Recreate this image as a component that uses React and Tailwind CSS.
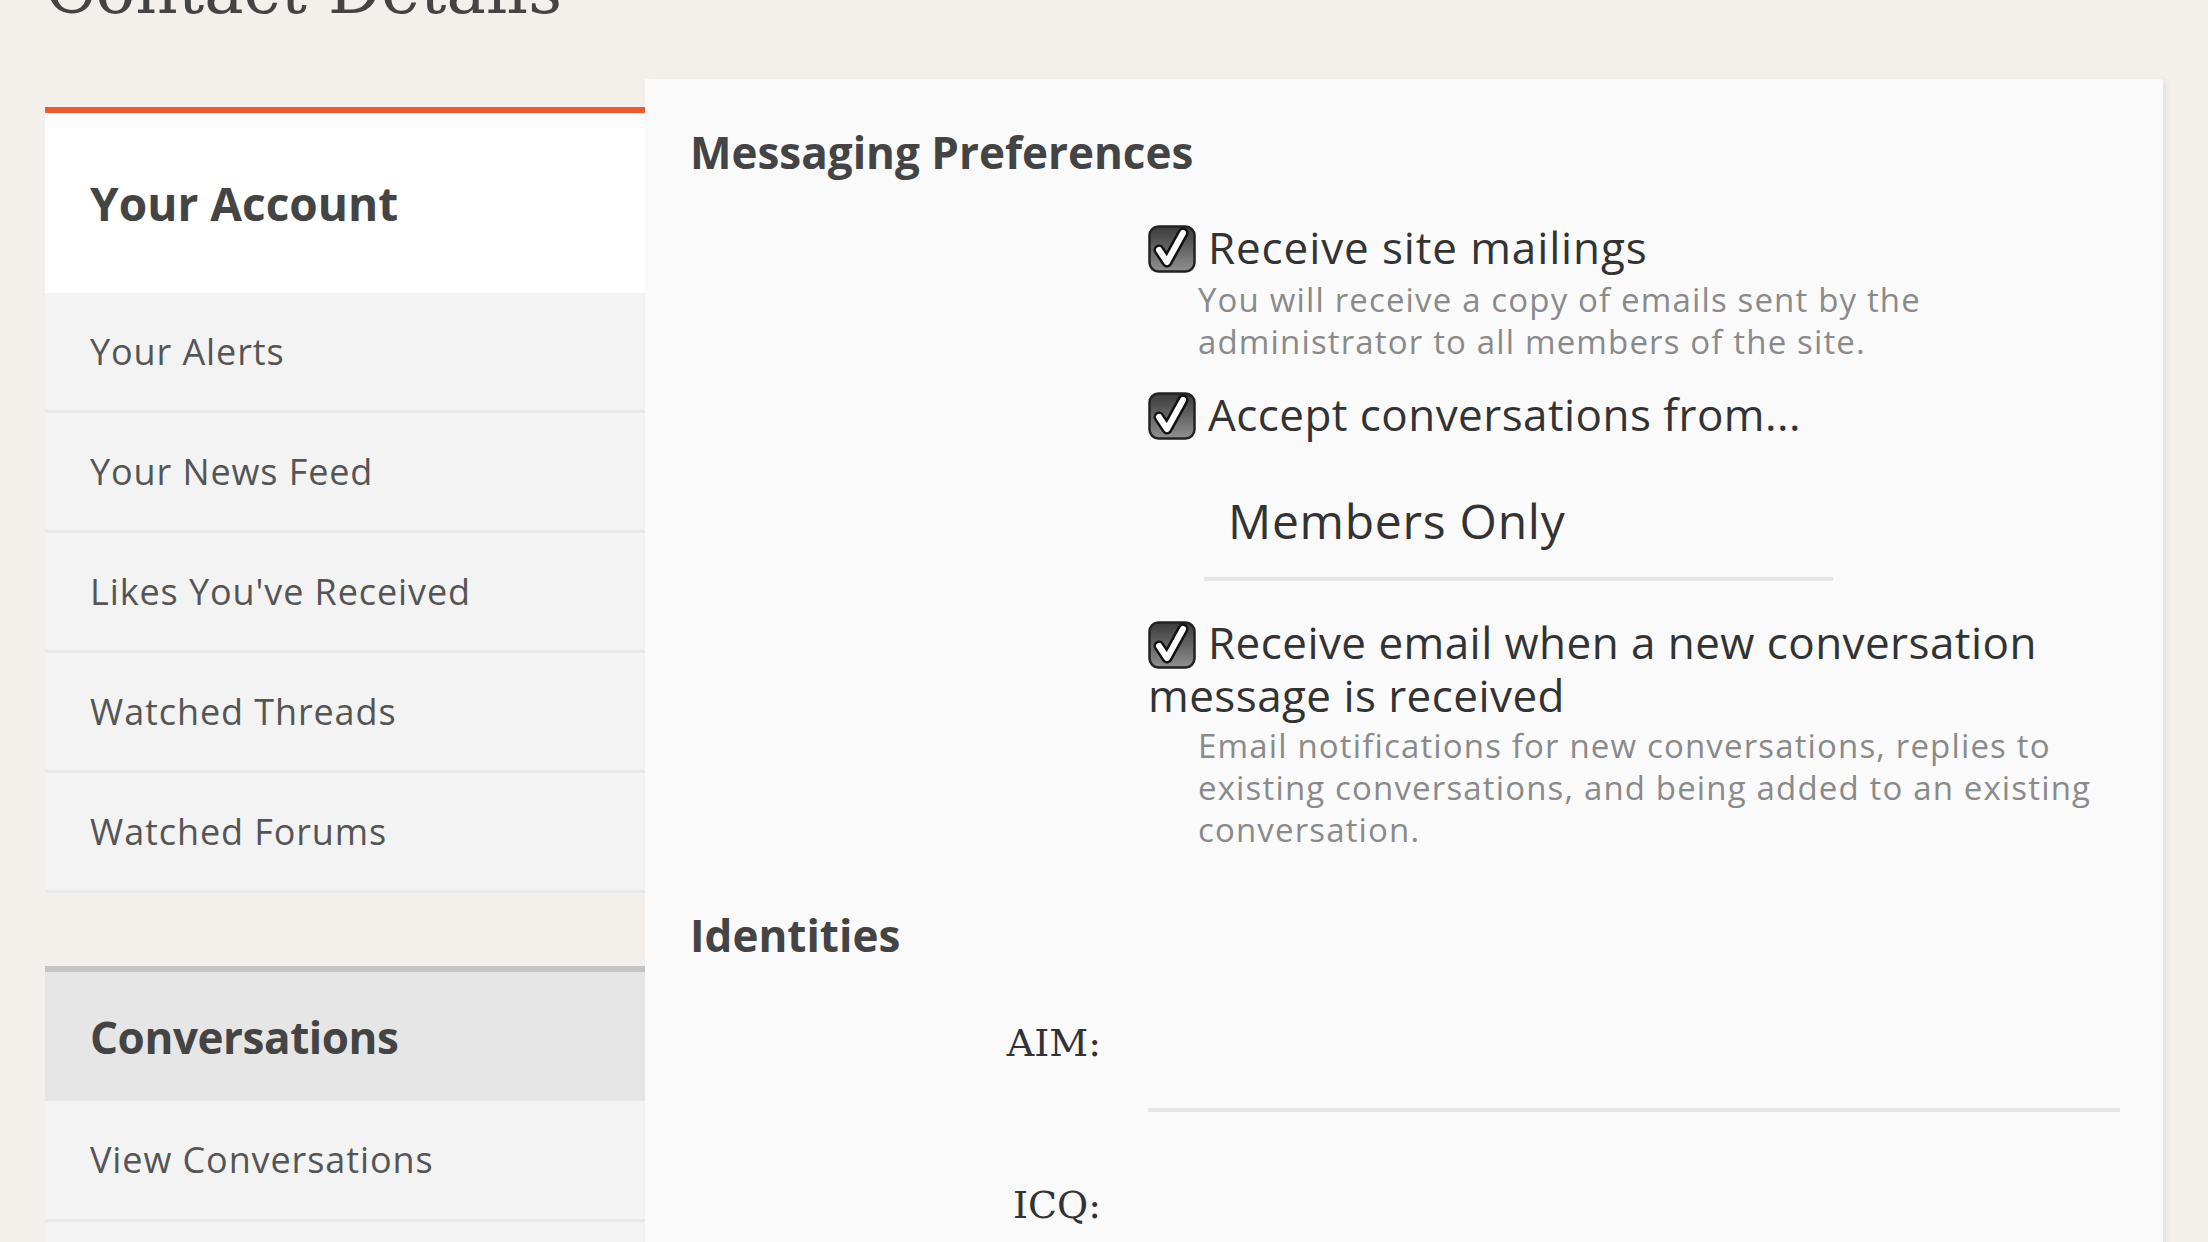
const Checkbox = () => (
  <svg width="48" height="48" viewBox="0 0 48 48" className="inline-block align-middle mr-[12px] -mt-[6px]">
    <defs>
      <linearGradient id="cbg" x1="0" y1="0" x2="0" y2="1">
        <stop offset="0" stopColor="#3a3a3a" />
        <stop offset="1" stopColor="#909090" />
      </linearGradient>
    </defs>
    <rect x="1.5" y="1.5" width="45" height="45" rx="9" fill="url(#cbg)" stroke="#222" strokeWidth="2.5" />
    <path d="M11 25 L19 37 L35 8" fill="none" stroke="#111" strokeWidth="11" strokeLinecap="round" strokeLinejoin="round" />
    <path d="M11 25 L19 37 L35 8" fill="none" stroke="#fff" strokeWidth="6" strokeLinecap="round" strokeLinejoin="round" />
  </svg>
)

const navItems = ['Your Alerts', 'Your News Feed', "Likes You've Received", 'Watched Threads', 'Watched Forums']

export default function App() {
  return (
    <div className="h-[1242px] overflow-hidden bg-[#f3f0eb] px-[45px] font-['Open_Sans',sans-serif]">
      <h1 className="-mt-[42px] mb-[55px] text-[66px] leading-[66px] text-[#444] font-['DejaVu_Serif',serif]">
        Contact Details
      </h1>

      <div className="flex items-start">
        {/* Sidebar */}
        <div className="w-[600px] shrink-0 mt-[28px]">
          <div className="border-t-[6px] border-[#ef5a2b] bg-white h-[186px] flex items-center px-[45px]">
            <span className="text-[46px] font-bold text-[#444]">Your Account</span>
          </div>
          {navItems.map((item) => (
            <div key={item} className="h-[120px] bg-[#f3f3f3] border-b-[3px] border-[#e8e8e8] flex items-center px-[45px]">
              <span className="text-[36px] text-[#555] tracking-[0.025em]">{item}</span>
            </div>
          ))}
          <div className="h-[73px]" />
          <div className="border-t-[6px] border-[#c3c3c3] bg-[#e6e6e6] h-[135px] flex items-center px-[45px]">
            <span className="text-[44px] font-bold text-[#444] tracking-[-0.01em]">Conversations</span>
          </div>
          <div className="h-[121px] bg-[#f3f3f3] border-b-[3px] border-[#e8e8e8] flex items-center px-[45px]">
            <span className="text-[36px] text-[#555] tracking-[0.025em]">View Conversations</span>
          </div>
          <div className="h-[120px] bg-[#f3f3f3]" />
        </div>

        {/* Main panel */}
        <div className="flex-1 bg-[#fafafa] rounded-tr-[3px] shadow-[3px_2px_6px_rgba(0,0,0,0.07)] pl-[45px] pr-[43px] pt-[45px] min-h-[1200px]">
          <h2 className="text-[44px] leading-[56px] font-bold text-[#444]">Messaging Preferences</h2>

          <div className="grid grid-cols-[411px_1fr] gap-x-[47px]">
            <div />
            <div>
              <p className="mt-[41px] text-[44px] leading-[52px] text-[#333] tracking-[0.02em]">
                <Checkbox />Receive site mailings
              </p>
              <p className="mt-[6px] ml-[50px] text-[33px] leading-[42px] text-[#8a8a8a] tracking-[0.035em]">
                You will receive a copy of emails sent by the<br />administrator to all members of the site.
              </p>

              <p className="mt-[25px] text-[44px] leading-[52px] text-[#333] tracking-[0.01em]">
                <Checkbox />Accept conversations from...
              </p>

              <div className="mt-[31px] ml-[56px] w-[629px] pt-[20px] pb-[26px] pl-[24px] border-b-4 border-[#e6e6e6]">
                <span className="block text-[48px] leading-[60px] text-[#333] tracking-[0.015em]">Members Only</span>
              </div>

              <p className="mt-[35px] text-[44px] leading-[53px] text-[#333] tracking-[0.01em]">
                <Checkbox />Receive email when a new conversation message is received
              </p>
              <p className="mt-[3px] ml-[50px] text-[33px] leading-[42px] text-[#8a8a8a] tracking-[0.035em]">
                Email notifications for new conversations, replies to<br />existing conversations, and being added to an existing<br />conversation.
              </p>
            </div>
          </div>

          <h2 className="mt-[56px] text-[44px] leading-[56px] font-bold text-[#444]">Identities</h2>

          <div className="grid grid-cols-[411px_1fr] gap-x-[47px] mt-[37px]">
            <label className="pt-[18px] text-right text-[38px] leading-[50px] text-[#333] font-['DejaVu_Serif',serif]">AIM:</label>
            <div className="h-[112px] border-b-4 border-[#e6e6e6]" />
          </div>
          <div className="grid grid-cols-[411px_1fr] gap-x-[47px] mt-[50px]">
            <label className="pt-[18px] text-right text-[38px] leading-[50px] text-[#333] font-['DejaVu_Serif',serif]">ICQ:</label>
            <div className="h-[112px] border-b-4 border-[#e6e6e6]" />
          </div>
        </div>
      </div>
    </div>
  )
}
